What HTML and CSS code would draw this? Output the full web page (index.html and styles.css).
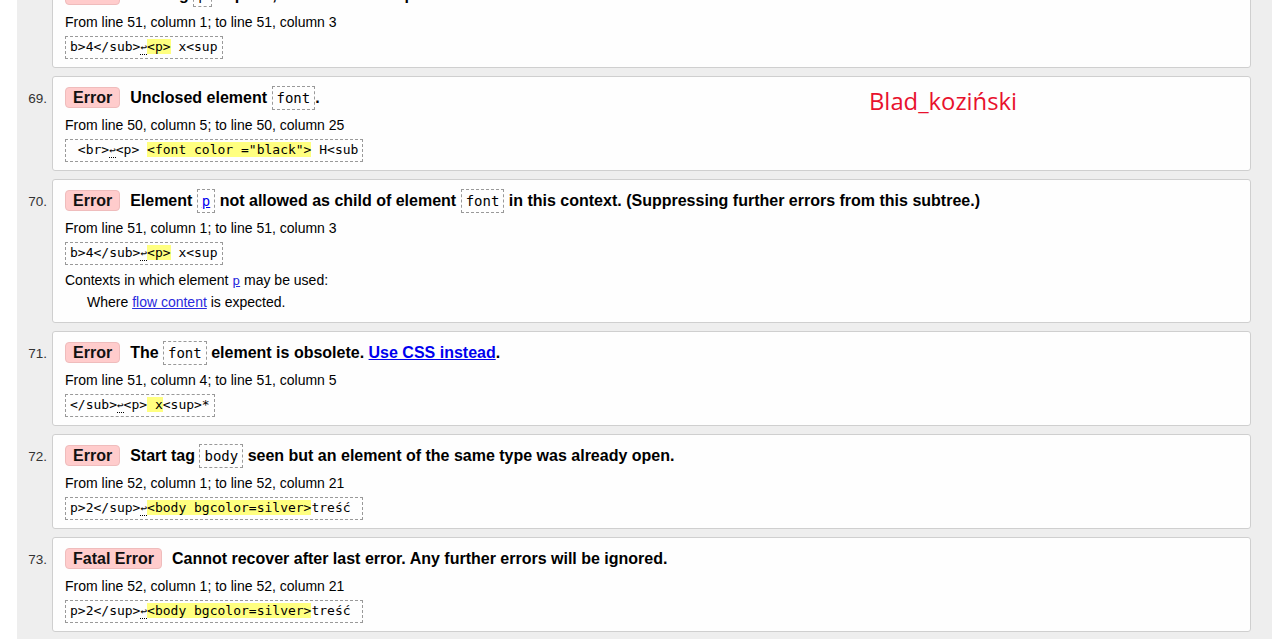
FILE: index.html
```html
<!DOCTYPE html>
<html lang="en">
<head>
<meta charset="utf-8">
<title>Validation results</title>
<link rel="stylesheet" href="styles.css">
</head>
<body>
<div class="page">
  <div class="label">Blad_koziński</div>
  <ol class="results">
    <li class="item">
      <span class="num">68.</span>
      <div class="card">
        <p class="msg"><span class="badge">Error</span><span class="text">End tag <code>p</code> implied, but there were open elements.</span></p>
        <p class="loc">From line 51, column 1; to line 51, column 3</p>
        <p class="extract"><code>b&gt;4&lt;/sub&gt;<abbr>↩</abbr><b class="hl">&lt;p&gt;</b> x&lt;sup</code></p>
      </div>
    </li>
    <li class="item">
      <span class="num">69.</span>
      <div class="card">
        <p class="msg"><span class="badge">Error</span><span class="text">Unclosed element <code>font</code>.</span></p>
        <p class="loc">From line 50, column 5; to line 50, column 25</p>
        <p class="extract"><code> &lt;br&gt;<abbr>↩</abbr>&lt;p&gt; <b class="hl">&lt;font color ="black"&gt;</b> H&lt;sub</code></p>
      </div>
    </li>
    <li class="item">
      <span class="num">70.</span>
      <div class="card">
        <p class="msg"><span class="badge">Error</span><span class="text">Element <code><a href="#p">p</a></code> not allowed as child of element <code>font</code> in this context. (Suppressing further errors from this subtree.)</span></p>
        <p class="loc">From line 51, column 1; to line 51, column 3</p>
        <p class="extract"><code>b&gt;4&lt;/sub&gt;<abbr>↩</abbr><b class="hl">&lt;p&gt;</b> x&lt;sup</code></p>
        <p class="ctx">Contexts in which element <a class="el" href="#p">p</a> may be used:</p>
        <p class="where">Where <a href="#flow">flow content</a> is expected.</p>
      </div>
    </li>
    <li class="item">
      <span class="num">71.</span>
      <div class="card">
        <p class="msg"><span class="badge">Error</span><span class="text">The <code>font</code> element is obsolete. <a href="#css">Use CSS instead</a>.</span></p>
        <p class="loc">From line 51, column 4; to line 51, column 5</p>
        <p class="extract"><code>&lt;/sub&gt;<abbr>↩</abbr>&lt;p&gt;<b class="hl"> x</b>&lt;sup&gt;*</code></p>
      </div>
    </li>
    <li class="item">
      <span class="num">72.</span>
      <div class="card">
        <p class="msg"><span class="badge">Error</span><span class="text">Start tag <code>body</code> seen but an element of the same type was already open.</span></p>
        <p class="loc">From line 52, column 1; to line 52, column 21</p>
        <p class="extract"><code>p&gt;2&lt;/sup&gt;<abbr>↩</abbr><b class="hl">&lt;body bgcolor=silver&gt;</b>treść </code></p>
      </div>
    </li>
    <li class="item">
      <span class="num">73.</span>
      <div class="card">
        <p class="msg"><span class="badge">Fatal Error</span><span class="text">Cannot recover after last error. Any further errors will be ignored.</span></p>
        <p class="loc">From line 52, column 1; to line 52, column 21</p>
        <p class="extract"><code>p&gt;2&lt;/sup&gt;<abbr>↩</abbr><b class="hl">&lt;body bgcolor=silver&gt;</b>treść </code></p>
      </div>
    </li>
  </ol>
</div>
</body>
</html>
```

FILE: styles.css
```css
html, body {
  margin: 0;
  padding: 0;
  background: #fff;
}

body {
  font-family: "Liberation Sans", Arial, sans-serif;
  color: #000;
}

.page {
  position: relative;
  margin-left: 17px;
  width: 1255px;
  height: 639px;
  background: #eeeeee;
  overflow: hidden;
}

.label {
  position: absolute;
  left: 852px;
  top: 85px;
  font-family: "Open Sans", sans-serif;
  font-size: 23.8px;
  line-height: 32px;
  color: #e8112d;
}

.results {
  list-style: none;
  margin: -27px 0 0;
  padding: 0 21px 0 0;
  display: flex;
  flex-direction: column;
  gap: 8px;
}

.item {
  display: flex;
  align-items: baseline;
}

.num {
  flex: none;
  width: 30px;
  margin-right: 5px;
  text-align: right;
  font-size: 13.5px;
  color: #333;
}

.card {
  flex: 1;
  min-width: 0;
  background: #fefefe;
  border: 1px solid #cfcfcf;
  border-radius: 3px;
  padding: 9px 12px 8px;
}

.msg {
  margin: 0 0 6px;
  font-size: 16px;
  font-weight: bold;
  line-height: 24px;
}

.badge {
  display: inline-block;
  background: #ffcccc;
  border: 1px solid #efbcbc;
  border-radius: 4px;
  padding: 1px 7px;
  line-height: 17px;
  margin-right: 10px;
  color: #111;
}

.msg code {
  font-family: "DejaVu Sans Mono", monospace;
  font-size: 14px;
  font-weight: normal;
  border: 1px dashed #999;
  padding: 3px 4px;
}

.msg a {
  color: #0000ee;
  text-decoration: underline;
}

.loc {
  margin: 0 0 5px;
  font-size: 14px;
  line-height: 18px;
}

.extract {
  margin: 0;
  line-height: 18px;
}

.extract code {
  display: inline-block;
  font-family: "DejaVu Sans Mono", monospace;
  font-size: 13px;
  line-height: 18px;
  white-space: pre;
  border: 1px dashed #999;
  padding: 1px 4px;
}

.extract abbr {
  text-decoration: none;
  border-bottom: 1px dotted #000;
  font-size: 11px;
}

.hl {
  font-weight: normal;
  background: #ffff80;
}

.ctx {
  margin: 6px 0 0;
  font-size: 14px;
  line-height: 18px;
}

.ctx .el {
  font-family: "DejaVu Sans Mono", monospace;
  font-size: 13px;
  color: #2a2add;
}

.where {
  margin: 3px 0 3px;
  padding-left: 22px;
  font-size: 14px;
  line-height: 18px;
}

.where a {
  color: #2a2add;
}
```
